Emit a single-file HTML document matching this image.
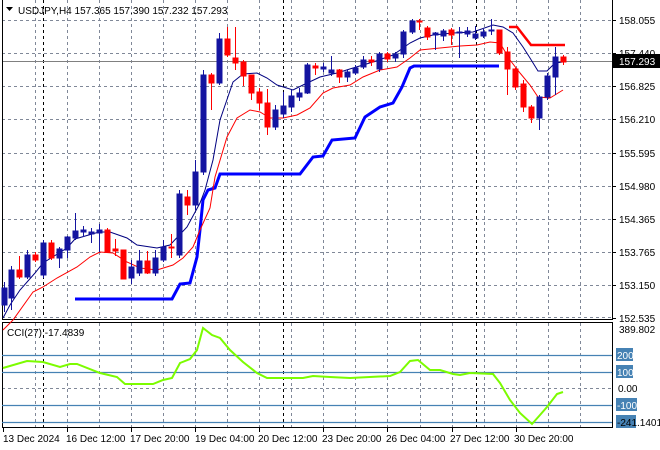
<!DOCTYPE html>
<html><head><meta charset="utf-8"><style>
html,body{margin:0;padding:0;background:#fff;}
svg{display:block;font-family:"Liberation Sans",sans-serif;}
</style></head><body>
<svg width="660" height="450" viewBox="0 0 660 450" xmlns="http://www.w3.org/2000/svg">
<rect width="660" height="450" fill="#fff"/>
<g stroke="#808898" stroke-width="1" stroke-dasharray="3,3" fill="none">
<path d="M35.5 0V318M67.5 0V318M99.5 0V318M131.5 0V318M163.5 0V318M195.5 0V318M227.5 0V318M259.5 0V318M291.5 0V318M323.5 0V318M355.5 0V318M387.5 0V318M420.5 0V318M452.5 0V318M484.5 0V318M516.5 0V318M548.5 0V318M580.5 0V318"/>
<path d="M35.5 323V427M67.5 323V427M99.5 323V427M131.5 323V427M163.5 323V427M195.5 323V427M227.5 323V427M259.5 323V427M291.5 323V427M323.5 323V427M355.5 323V427M387.5 323V427M420.5 323V427M452.5 323V427M484.5 323V427M516.5 323V427M548.5 323V427M580.5 323V427"/>
<path d="M2 20.5H612M2 53.5H612M2 86.5H612M2 119.5H612M2 153.5H612M2 186.5H612M2 219.5H612M2 252.5H612M2 285.5H612M2 317.5H612M2 388.5H612"/>
</g>
<g stroke="#000" stroke-width="1" stroke-dasharray="3,3">
<path d="M43.5 0V318M283.5 0V318M476.5 0V318M43.5 323V427M283.5 323V427M476.5 323V427"/>
</g>
<path d="M2 61.5H612" stroke="#808080" stroke-width="1"/>
<path d="M2.5 0V319.5H612.5V0M2.5 322.5H612.5V427.5H2.5Z" stroke="#000" fill="none"/>
<g stroke="#4682b4" stroke-width="1.3">
<path d="M2 355.5H612M2 372.5H612M2 405.5H612M2 422.5H612"/>
</g>
<polyline fill="none" stroke="#0000ff" stroke-width="3" points="75,299 172,299 180,284 190,283 197,257 200,230 203,200 208,190 215,188 220,174 300,174 313,157 323,156 332,140 355,138 365,117 380,107 393,103 402,87 410,68 414,66 499,66"/>
<polyline fill="none" stroke="#ff0000" stroke-width="2.5" points="509,27 517,27 531,45 565,45"/>
<polyline fill="none" stroke="#ff0000" stroke-width="1" points="3,330 13,320 33,292 43,287 57,278 77,267 90,257 100,252 113,253 127,262 140,268 157,270 173,265 183,258 193,247 200,230 210,208 215,177 227,137 237,118 250,110 260,112 270,118 283,118 297,115 310,108 323,93 333,88 350,85 363,77 380,70 397,67 410,58 420,50 440,48 460,46 477,45 490,42 500,43 510,60 520,73 530,85 538,97 550,98 563,90"/>
<polyline fill="none" stroke="#000080" stroke-width="1" points="3,318 10,305 20,290 35,273 43,263 67,248 75,239 99,232 110,232 127,238 137,245 157,248 170,245 187,227 200,203 205,190 213,160 220,120 233,82 243,74 257,73 267,78 277,85 293,90 303,85 320,77 337,73 353,68 373,62 393,55 403,48 410,43 420,38 433,35 453,33 473,32 493,25 503,27 513,33 523,47 530,58 538,71 547,71 555,63 563,62"/>
<g stroke-width="1">
<g stroke="#1414a0" fill="#1414a0">
<path d="M4.5 282V312M11.5 266V310M27.5 250V279M43.5 240V278M59.5 247V268M67.5 236V258M75.5 213V240M83.5 226V237M91.5 228V243M99.5 224V252M131.5 260V284M139.5 250V276M155.5 250V276M163.5 240V262M179.5 190V258M195.5 160V210M203.5 70V175M219.5 33V85M275.5 105V130M283.5 92V118M291.5 90V112M299.5 88V101M307.5 63V94M323.5 63V72M331.5 56V76M347.5 70V82M355.5 65V75M363.5 56V69M379.5 52V72M395.5 52V62M403.5 30V58M412.5 19V34M435.5 32V50M443.5 29V41M459.5 27V58M467.5 27V37M475.5 26V40M483.5 29V38M491.5 19V35M539.5 95V130M547.5 73V100M555.5 47V95"/>
<rect x="2" y="288" width="5" height="17"/><rect x="9" y="270" width="5" height="28"/><rect x="25" y="255" width="5" height="22"/><rect x="41" y="243" width="5" height="32"/><rect x="57" y="249" width="5" height="9"/><rect x="65" y="237" width="5" height="13"/><rect x="73" y="231" width="5" height="7"/><rect x="81" y="230" width="5" height="2"/><rect x="89" y="232" width="5" height="2"/><rect x="97" y="230" width="5" height="3"/><rect x="129" y="267" width="5" height="11"/><rect x="137" y="261" width="5" height="12"/><rect x="153" y="258" width="5" height="15"/><rect x="161" y="247" width="5" height="13"/><rect x="177" y="194" width="5" height="61"/><rect x="193" y="172" width="5" height="33"/><rect x="201" y="75" width="5" height="97"/><rect x="217" y="39" width="5" height="44"/><rect x="273" y="110" width="5" height="17"/><rect x="281" y="106" width="5" height="8"/><rect x="289" y="96" width="5" height="11"/><rect x="297" y="93" width="5" height="4"/><rect x="305" y="65" width="5" height="28"/><rect x="321" y="67" width="5" height="2"/><rect x="329" y="70" width="5" height="3"/><rect x="345" y="72" width="5" height="5"/><rect x="353" y="68" width="5" height="5"/><rect x="361" y="60" width="5" height="7"/><rect x="377" y="54" width="5" height="15"/><rect x="393" y="54" width="5" height="4"/><rect x="401" y="32" width="5" height="22"/><rect x="410" y="21" width="5" height="11"/><rect x="433" y="33" width="5" height="2"/><rect x="441" y="31" width="5" height="5"/><rect x="457" y="32" width="5" height="1"/><rect x="465" y="31" width="5" height="3"/><rect x="473" y="34" width="5" height="4"/><rect x="481" y="32" width="5" height="4"/><rect x="489" y="30" width="5" height="1"/><rect x="537" y="97" width="5" height="21"/><rect x="545" y="76" width="5" height="21"/><rect x="553" y="57" width="5" height="20"/>
</g>
<g stroke="#ff0000" fill="#ff0000">
<path d="M19.5 256V279M35.5 252V262M51.5 240V260M107.5 228V253M115.5 239V256M123.5 250V279M147.5 251V274M171.5 234V258M187.5 190V215M211.5 73V110M227.5 27V57M235.5 27V70M243.5 60V86M251.5 75V100M259.5 88V110M267.5 89V135M315.5 63V75M339.5 69V83M371.5 56V66M387.5 52V62M419.5 19V30M427.5 26V40M451.5 28V45M499.5 30V55M507.5 47V95M515.5 68V90M523.5 80V112M531.5 105V123M563.5 55V65"/>
<rect x="17" y="270" width="5" height="7"/><rect x="33" y="255" width="5" height="5"/><rect x="49" y="243" width="5" height="15"/><rect x="105" y="230" width="5" height="22"/><rect x="113" y="249" width="5" height="2"/><rect x="121" y="250" width="5" height="29"/><rect x="145" y="261" width="5" height="12"/><rect x="169" y="247" width="5" height="1"/><rect x="185" y="197" width="5" height="8"/><rect x="209" y="75" width="5" height="8"/><rect x="225" y="39" width="5" height="16"/><rect x="233" y="58" width="5" height="5"/><rect x="241" y="62" width="5" height="14"/><rect x="249" y="75" width="5" height="18"/><rect x="257" y="92" width="5" height="11"/><rect x="265" y="103" width="5" height="24"/><rect x="313" y="66" width="5" height="2"/><rect x="337" y="70" width="5" height="7"/><rect x="369" y="60" width="5" height="2"/><rect x="385" y="54" width="5" height="5"/><rect x="417" y="21" width="5" height="1"/><rect x="425" y="28" width="5" height="9"/><rect x="449" y="30" width="5" height="5"/><rect x="497" y="30" width="5" height="23"/><rect x="505" y="52" width="5" height="17"/><rect x="513" y="69" width="5" height="18"/><rect x="521" y="84" width="5" height="23"/><rect x="529" y="107" width="5" height="11"/><rect x="561" y="57" width="5" height="5"/>
</g>
</g>
<polyline fill="none" stroke="#7cfc00" stroke-width="2" points="3,368 27,361 43,362 60,367 70,364 77,364 100,373 117,377 125,384 153,384 163,380 172,378 180,363 190,359 197,350 203,328 212,335 220,338 230,350 243,362 257,373 267,378 303,378 313,376 330,377 350,378 390,376 400,372 410,361 418,360 430,370 440,370 453,374 460,375 470,373 493,374 500,383 510,400 520,413 532,424 540,415 547,407 557,394 563,392"/>
<path d="M6 7H13L9.5 11Z" fill="#000"/>
<text x="18" y="14" font-size="10" fill="#000">USDJPY,H4  157.365 157.390 157.232 157.293</text>
<text x="7" y="336" font-size="10" fill="#000">CCI(27) -17.4839</text>
<g font-size="10" fill="#000">
<path d="M612 20.5h4M612 53.5h4M612 86.5h4M612 119.5h4M612 153.5h4M612 186.5h4M612 219.5h4M612 252.5h4M612 285.5h4M612 318.5h4" stroke="#000"/>
<text x="619" y="24">158.055</text>
<text x="619" y="57">157.440</text>
<text x="619" y="90">156.825</text>
<text x="619" y="123">156.210</text>
<text x="619" y="157">155.595</text>
<text x="619" y="190">154.980</text>
<text x="619" y="223">154.365</text>
<text x="619" y="256">153.765</text>
<text x="619" y="289">153.150</text>
<text x="619" y="322">152.535</text>
<rect x="613" y="54" width="47" height="14" fill="#000"/>
<text x="619" y="65" fill="#fff">157.293</text>
<text x="619" y="333">389.802</text>
<rect x="616" y="348" width="17" height="13" fill="#4682b4"/>
<text x="617" y="359" fill="#fff">200</text>
<rect x="616" y="365" width="17" height="13" fill="#4682b4"/>
<text x="617" y="376" fill="#fff">100</text>
<text x="618" y="392">0.00</text>
<rect x="616" y="398" width="21" height="13" fill="#4682b4"/>
<text x="617" y="409" fill="#fff">-100</text>
<rect x="616" y="415" width="20" height="13" fill="#4682b4"/>
<text x="617" y="426">-241.1401</text>
</g>
<g font-size="10" fill="#000">
<path d="M3.5 428v4M67.5 428v4M131.5 428v4M195.5 428v4M259.5 428v4M323.5 428v4M387.5 428v4M452.5 428v4M516.5 428v4" stroke="#000"/>
<text x="3" y="442">13 Dec 2024</text>
<text x="66" y="442">16 Dec 12:00</text>
<text x="130" y="442">17 Dec 20:00</text>
<text x="195" y="442">19 Dec 04:00</text>
<text x="258" y="442">20 Dec 12:00</text>
<text x="322" y="442">23 Dec 20:00</text>
<text x="386" y="442">26 Dec 04:00</text>
<text x="450" y="442">27 Dec 12:00</text>
<text x="514" y="442">30 Dec 20:00</text>
</g>
</svg>
</body></html>
